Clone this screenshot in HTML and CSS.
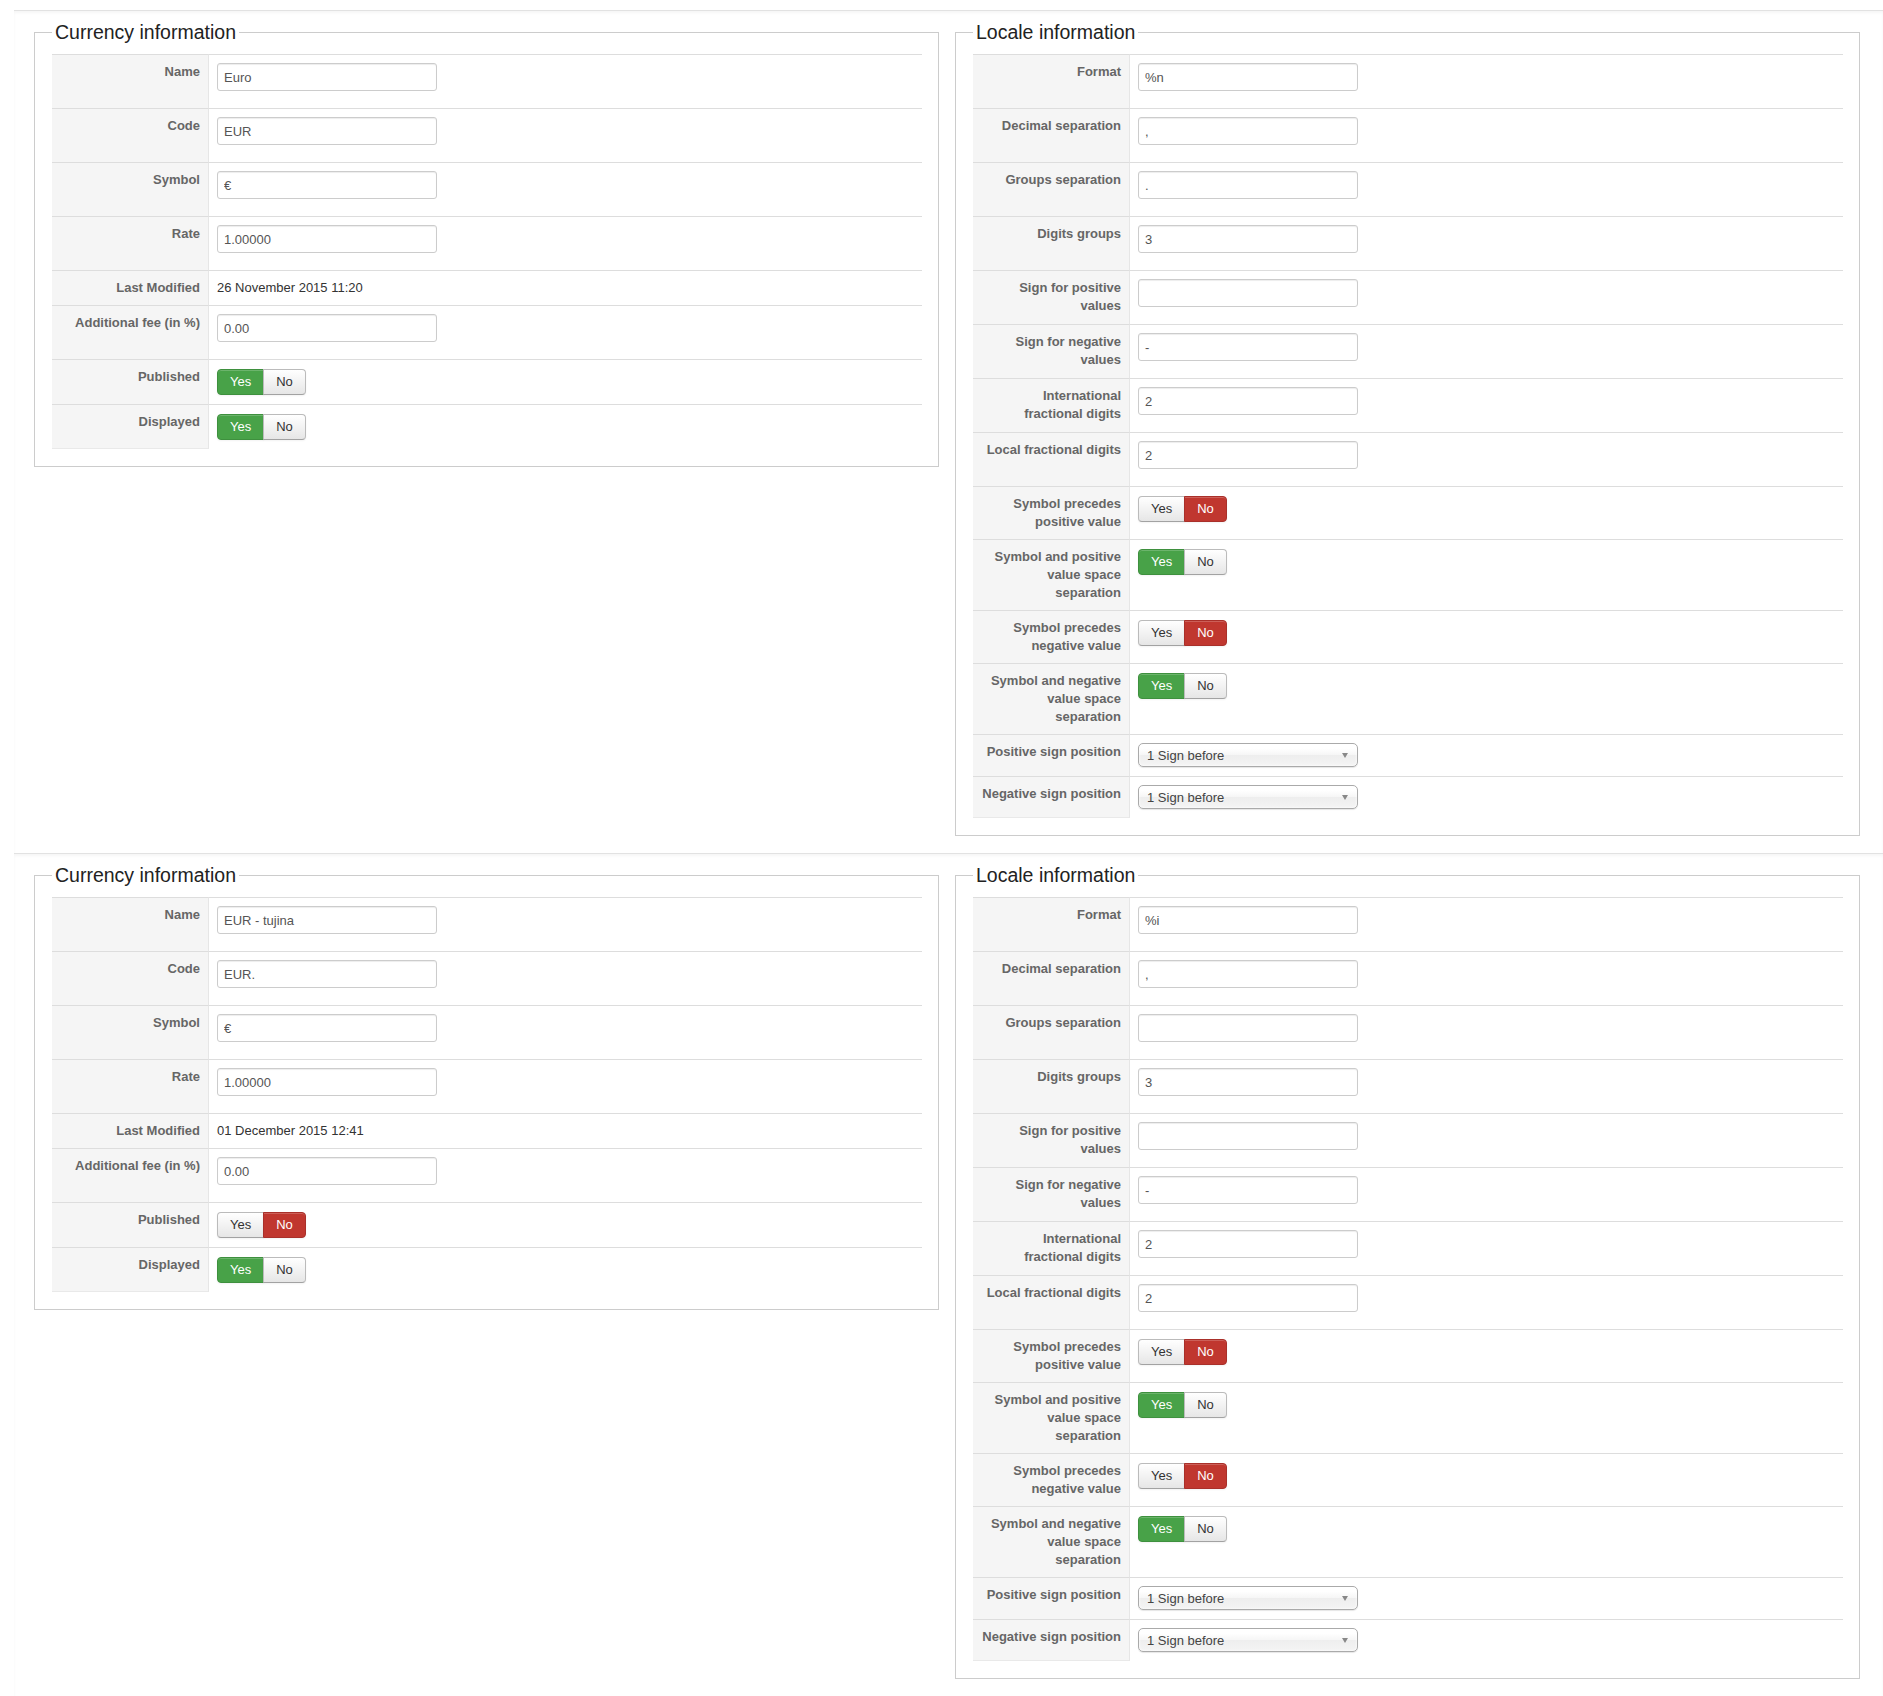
FILE: index.html
```html
<!DOCTYPE html>
<html lang="en">
<head>
  <meta charset="UTF-8">
  <title>Currencies</title>
  <link rel="stylesheet" href="styles.css">
</head>
<body>

<div class="page">

  <!-- Euro -->
  <div class="record">
    <fieldset class="panel">
      <legend>Currency information</legend>
      <table class="admintable">
        <tr><td class="key">Name</td><td><input type="text" class="inputbox" value="Euro"></td></tr>
        <tr><td class="key">Code</td><td><input type="text" class="inputbox" value="EUR"></td></tr>
        <tr><td class="key">Symbol</td><td><input type="text" class="inputbox" value="€"></td></tr>
        <tr><td class="key">Rate</td><td><input type="text" class="inputbox" value="1.00000"></td></tr>
        <tr><td class="key">Last Modified</td><td>26 November 2015 11:20</td></tr>
        <tr><td class="key">Additional fee (in %)</td><td><input type="text" class="inputbox" value="0.00"></td></tr>
        <tr>
          <td class="key">Published</td>
          <td><div class="btn-group"><span class="btn btn-success">Yes</span><span class="btn">No</span></div></td>
        </tr>
        <tr>
          <td class="key">Displayed</td>
          <td><div class="btn-group"><span class="btn btn-success">Yes</span><span class="btn">No</span></div></td>
        </tr>
      </table>
    </fieldset>

    <fieldset class="panel">
      <legend>Locale information</legend>
      <table class="admintable">
        <tr><td class="key">Format</td><td><input type="text" class="inputbox" value="%n"></td></tr>
        <tr><td class="key">Decimal separation</td><td><input type="text" class="inputbox" value=","></td></tr>
        <tr><td class="key">Groups separation</td><td><input type="text" class="inputbox" value="."></td></tr>
        <tr><td class="key">Digits groups</td><td><input type="text" class="inputbox" value="3"></td></tr>
        <tr><td class="key">Sign for positive values</td><td><input type="text" class="inputbox" value=""></td></tr>
        <tr><td class="key">Sign for negative values</td><td><input type="text" class="inputbox" value="-"></td></tr>
        <tr><td class="key">International fractional digits</td><td><input type="text" class="inputbox" value="2"></td></tr>
        <tr><td class="key">Local fractional digits</td><td><input type="text" class="inputbox" value="2"></td></tr>
        <tr>
          <td class="key">Symbol precedes positive value</td>
          <td><div class="btn-group"><span class="btn">Yes</span><span class="btn btn-danger">No</span></div></td>
        </tr>
        <tr>
          <td class="key">Symbol and positive value space separation</td>
          <td><div class="btn-group"><span class="btn btn-success">Yes</span><span class="btn">No</span></div></td>
        </tr>
        <tr>
          <td class="key">Symbol precedes negative value</td>
          <td><div class="btn-group"><span class="btn">Yes</span><span class="btn btn-danger">No</span></div></td>
        </tr>
        <tr>
          <td class="key">Symbol and negative value space separation</td>
          <td><div class="btn-group"><span class="btn btn-success">Yes</span><span class="btn">No</span></div></td>
        </tr>
        <tr>
          <td class="key">Positive sign position</td>
          <td><a class="chzn-single"><span>1 Sign before</span><b></b></a></td>
        </tr>
        <tr>
          <td class="key">Negative sign position</td>
          <td><a class="chzn-single"><span>1 Sign before</span><b></b></a></td>
        </tr>
      </table>
    </fieldset>
  </div>

  <!-- EUR - tujina -->
  <div class="record">
    <fieldset class="panel">
      <legend>Currency information</legend>
      <table class="admintable">
        <tr><td class="key">Name</td><td><input type="text" class="inputbox" value="EUR - tujina"></td></tr>
        <tr><td class="key">Code</td><td><input type="text" class="inputbox" value="EUR."></td></tr>
        <tr><td class="key">Symbol</td><td><input type="text" class="inputbox" value="€"></td></tr>
        <tr><td class="key">Rate</td><td><input type="text" class="inputbox" value="1.00000"></td></tr>
        <tr><td class="key">Last Modified</td><td>01 December 2015 12:41</td></tr>
        <tr><td class="key">Additional fee (in %)</td><td><input type="text" class="inputbox" value="0.00"></td></tr>
        <tr>
          <td class="key">Published</td>
          <td><div class="btn-group"><span class="btn">Yes</span><span class="btn btn-danger">No</span></div></td>
        </tr>
        <tr>
          <td class="key">Displayed</td>
          <td><div class="btn-group"><span class="btn btn-success">Yes</span><span class="btn">No</span></div></td>
        </tr>
      </table>
    </fieldset>

    <fieldset class="panel">
      <legend>Locale information</legend>
      <table class="admintable">
        <tr><td class="key">Format</td><td><input type="text" class="inputbox" value="%i"></td></tr>
        <tr><td class="key">Decimal separation</td><td><input type="text" class="inputbox" value=","></td></tr>
        <tr><td class="key">Groups separation</td><td><input type="text" class="inputbox" value=""></td></tr>
        <tr><td class="key">Digits groups</td><td><input type="text" class="inputbox" value="3"></td></tr>
        <tr><td class="key">Sign for positive values</td><td><input type="text" class="inputbox" value=""></td></tr>
        <tr><td class="key">Sign for negative values</td><td><input type="text" class="inputbox" value="-"></td></tr>
        <tr><td class="key">International fractional digits</td><td><input type="text" class="inputbox" value="2"></td></tr>
        <tr><td class="key">Local fractional digits</td><td><input type="text" class="inputbox" value="2"></td></tr>
        <tr>
          <td class="key">Symbol precedes positive value</td>
          <td><div class="btn-group"><span class="btn">Yes</span><span class="btn btn-danger">No</span></div></td>
        </tr>
        <tr>
          <td class="key">Symbol and positive value space separation</td>
          <td><div class="btn-group"><span class="btn btn-success">Yes</span><span class="btn">No</span></div></td>
        </tr>
        <tr>
          <td class="key">Symbol precedes negative value</td>
          <td><div class="btn-group"><span class="btn">Yes</span><span class="btn btn-danger">No</span></div></td>
        </tr>
        <tr>
          <td class="key">Symbol and negative value space separation</td>
          <td><div class="btn-group"><span class="btn btn-success">Yes</span><span class="btn">No</span></div></td>
        </tr>
        <tr>
          <td class="key">Positive sign position</td>
          <td><a class="chzn-single"><span>1 Sign before</span><b></b></a></td>
        </tr>
        <tr>
          <td class="key">Negative sign position</td>
          <td><a class="chzn-single"><span>1 Sign before</span><b></b></a></td>
        </tr>
      </table>
    </fieldset>
  </div>

</div>

</body>
</html>
```

FILE: styles.css
```css
body {
  margin: 0;
  font-family: "Liberation Sans", Arial, sans-serif;
  font-size: 13px;
  line-height: 18px;
  color: #333;
  background: #fff;
}
.page {
  padding: 10px 0 0 14px;
}
.record {
  display: grid;
  grid-template-columns: 1fr 1fr;
  column-gap: 16px;
  align-items: start;
  padding: 9px 23px 17px 20px;
  border-top: 1px solid #e2e2e2;
  box-shadow: inset 0 2px 3px rgba(0, 0, 0, 0.04);
}
.panel {
  margin: 0;
  min-width: 0;
  padding: 10px 16px 17px 17px;
  border: 1px solid #ccc;
}
.panel legend {
  padding: 0 3px;
  font-size: 19.5px;
  line-height: 24px;
  color: #222;
}

/* Key / value table */
.admintable {
  width: 100%;
  border-collapse: separate;
  border-spacing: 0;
}
.admintable td {
  padding: 8px;
  vertical-align: top;
  text-align: left;
  border-top: 1px solid #ddd;
}
.admintable td.key {
  width: 139px;
  padding-left: 9px;
  text-align: right;
  font-weight: bold;
  color: #666;
  background: #f5f5f5;
  border-right: 1px solid #e6e6e6;
}
.admintable tr:last-child td.key {
  border-bottom: 1px solid #e9e9e9;
}

.inputbox {
  display: block;
  box-sizing: border-box;
  width: 220px;
  height: 28px;
  margin: 0 0 9px;
  padding: 4px 6px;
  font: 13px/18px "Liberation Sans", Arial, sans-serif;
  color: #555;
  background: #fff;
  border: 1px solid #ccc;
  border-radius: 3px;
  box-shadow: inset 0 1px 1px rgba(0, 0, 0, 0.075);
}

/* Yes / No toggles */
.btn-group {
  display: flex;
  width: max-content;
  margin: 1px 0 1px;
}
.btn {
  padding: 4px 12px;
  line-height: 16px;
  font-size: 13px;
  color: #333;
  background: linear-gradient(#fff, #e6e6e6);
  border: 1px solid #bbb;
  border-bottom-color: #a2a2a2;
  box-shadow: inset 0 1px 0 rgba(255, 255, 255, 0.2), 0 1px 2px rgba(0, 0, 0, 0.05);
}
.btn + .btn {
  margin-left: -1px;
}
.btn:first-child {
  border-radius: 4px 0 0 4px;
}
.btn:last-child {
  border-radius: 0 4px 4px 0;
}
.btn-success {
  color: #fff;
  background: #48a248;
  border-color: #3e903e;
}
.btn-danger {
  color: #fff;
  background: #c0372f;
  border-color: #a9302a;
}

/* chosen-style dropdown */
.chzn-single {
  display: flex;
  align-items: center;
  justify-content: space-between;
  box-sizing: border-box;
  width: 220px;
  height: 24px;
  margin-bottom: 1px;
  padding: 1px 9px 0 8px;
  color: #444;
  text-decoration: none;
  line-height: 22px;
  background: linear-gradient(#fff 20%, #f6f6f6 50%, #eee 52%, #f4f4f4 100%);
  border: 1px solid #aaa;
  border-radius: 5px;
  box-shadow: inset 0 0 3px #fff, 0 1px 1px rgba(0, 0, 0, 0.1);
}
.chzn-single b {
  width: 0;
  height: 0;
  border-left: 3.5px solid transparent;
  border-right: 3.5px solid transparent;
  border-top: 5px solid #888;
}
```
